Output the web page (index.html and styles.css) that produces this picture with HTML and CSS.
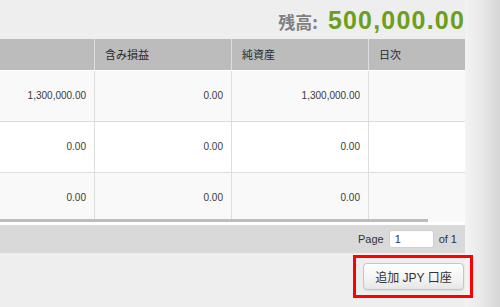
FILE: index.html
```html
<!DOCTYPE html>
<html lang="ja">
<head>
<meta charset="utf-8">
<link rel="stylesheet" href="styles.css">
</head>
<body>
<div class="page">
  <div class="main">
    <div class="balance">
      <span class="balance-label">残高:</span>
      <span class="balance-value">500,000.00</span>
    </div>
    <div class="grid">
      <div class="head">
        <div class="hcell"></div>
        <div class="hcell">含み損益</div>
        <div class="hcell">純資産</div>
        <div class="hcell last">日次</div>
      </div>
      <div class="rows">
        <div class="row alt">
          <div class="cell">1,300,000.00</div>
          <div class="cell">0.00</div>
          <div class="cell">1,300,000.00</div>
          <div class="cell last"></div>
        </div>
        <div class="row">
          <div class="cell">0.00</div>
          <div class="cell">0.00</div>
          <div class="cell">0.00</div>
          <div class="cell last"></div>
        </div>
        <div class="row alt">
          <div class="cell">0.00</div>
          <div class="cell">0.00</div>
          <div class="cell">0.00</div>
          <div class="cell last"></div>
        </div>
        <div class="hscroll"><div class="thumb"></div></div>
      </div>
      <div class="pager">
        <span class="pager-text">Page</span>
        <span class="pager-input">1</span>
        <span class="pager-text">of 1</span>
      </div>
    </div>
    <div class="actions">
      <div class="highlight">
        <button class="btn">追加 JPY 口座</button>
      </div>
    </div>
  </div>
  <div class="edge"></div>
</div>
</body>
</html>
```

FILE: styles.css
```css
html, body {
  margin: 0;
  padding: 0;
}
body {
  width: 500px;
  height: 307px;
  overflow: hidden;
  background: #eeeeee;
  font-family: "Liberation Sans", Arial, "Noto Sans CJK JP", sans-serif;
  color: #333;
}
.page {
  display: flex;
  height: 307px;
}
.main {
  width: 465px;
  flex: none;
  position: relative;
  z-index: 1;
}
.edge {
  flex: 1;
  background: linear-gradient(to right, #f3f3f3 0%, #e8e8e8 50%, #d6d6d6 100%);
}
.balance {
  height: 39px;
  box-sizing: border-box;
  padding-top: 6px;
  display: flex;
  justify-content: flex-end;
  align-items: baseline;
  gap: 10px;
}
.balance-label {
  font-size: 17px;
  font-weight: bold;
  color: #808080;
  font-family: "Noto Sans CJK JP", "Liberation Sans", sans-serif;
  line-height: 28px;
}
.balance-value {
  font-size: 25px;
  font-weight: bold;
  color: #6c9f1d;
  letter-spacing: 1.2px;
  line-height: 28px;
}
.head {
  display: grid;
  grid-template-columns: 95px 137px 137px 96px;
  height: 31px;
  background: #bcbcbc;
  border-bottom: 1px solid #ffffff;
}
.hcell {
  box-sizing: border-box;
  border-right: 1px solid #dedede;
  padding-left: 10px;
  font-size: 11px;
  line-height: 31px;
  color: #2a2a2a;
  font-family: "Noto Sans CJK JP", "Liberation Sans", sans-serif;
}
.hcell.last, .cell.last {
  border-right: none;
}
.rows {
  position: relative;
  height: 154px;
  overflow: hidden;
  background: #ffffff;
}
.row {
  display: grid;
  grid-template-columns: 95px 137px 137px 96px;
  height: 51px;
  box-sizing: border-box;
  border-bottom: 1px solid #dddddd;
  background: #ffffff;
}
.row.alt {
  background: #f9f9f9;
}
.cell {
  box-sizing: border-box;
  border-right: 1px solid #dddddd;
  text-align: right;
  padding-right: 8px;
  font-size: 10px;
  line-height: 50px;
  color: #3a3a3a;
}
.hscroll {
  position: absolute;
  left: 0;
  right: 0;
  top: 148px;
  height: 6px;
  background: linear-gradient(to bottom, transparent 0, transparent 3px, #ffffff 3px);
}
.thumb {
  width: 428px;
  height: 3px;
  background: #bcbcbc;
}
.pager {
  height: 28px;
  background: #d9d9d9;
  display: flex;
  justify-content: flex-end;
  align-items: center;
  gap: 5px;
  padding-right: 8px;
}
.pager-text {
  font-size: 11px;
  color: #333;
}
.pager-input {
  box-sizing: border-box;
  width: 45px;
  height: 18px;
  background: #ffffff;
  border-radius: 3px;
  border: 1px solid #d0d0d0;
  font-size: 11px;
  line-height: 16px;
  padding-left: 5px;
  color: #333;
}
.actions {
  display: flex;
  justify-content: flex-end;
  margin-top: 2px;
  margin-right: -8px;
}
.highlight {
  border: 3px solid #ff0000;
  padding: 5px 6px 5px 7px;
  display: flex;
}
.btn {
  width: 101px;
  height: 27px;
  box-sizing: border-box;
  border: 1px solid #c6c6c6;
  border-radius: 4px;
  background: linear-gradient(to bottom, #ffffff 0%, #f3f3f3 60%, #e6e6e6 100%);
  box-shadow: 0 1px 1px rgba(0,0,0,0.08);
  font-family: "Liberation Sans", Arial, "Noto Sans CJK JP", sans-serif;
  font-size: 12px;
  color: #333;
  padding: 0;
  margin: 0;
}
```
